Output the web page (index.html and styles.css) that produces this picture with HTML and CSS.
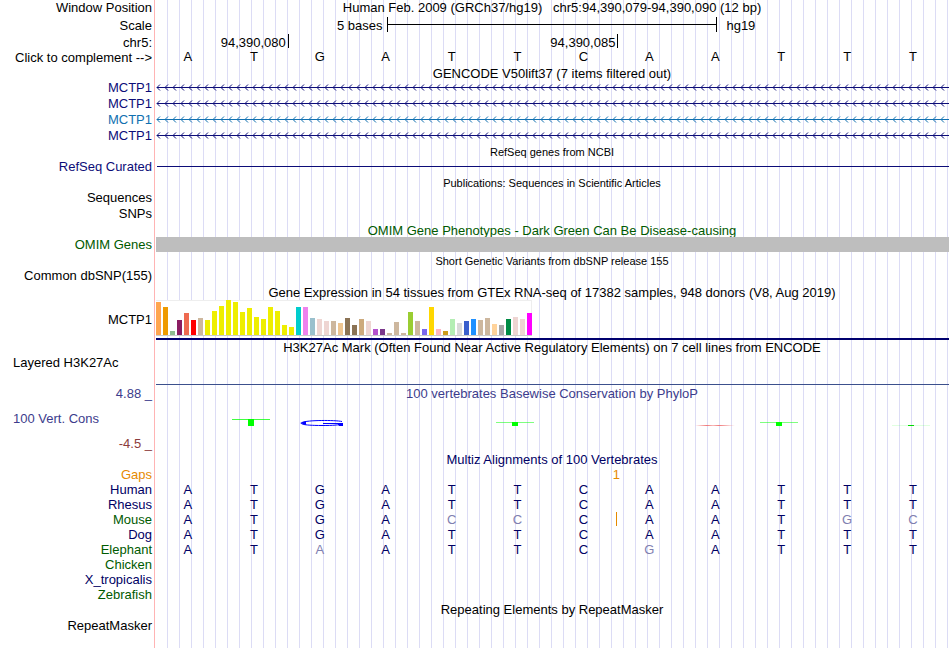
FILE: index.html
```html
<!DOCTYPE html>
<html lang="en">
<head>
  <meta charset="utf-8">
  <title>Human chr5:94,390,079-94,390,090</title>
  <link rel="stylesheet" href="styles.css">
</head>
<body>
  <main class="browser">
    <div class="row ruler">
      <div class="label">Window Position</div>
      <div class="title">Human Feb. 2009 (GRCh37/hg19) &nbsp; chr5:94,390,079-94,390,090 (12 bp)</div>
    </div>
    <div class="row ruler scale-row">
      <div class="label">Scale</div>
      <div class="scale">
        <span class="scale-name">5 bases</span>
        <span class="scale-bar"></span>
        <span class="scale-db">hg19</span>
      </div>
    </div>
    <div class="row coords">
      <div class="label">chr5:</div>
      <div class="bases ticks">
        <span class="tick tick-first">94,390,080</span>
        <span class="tick tick-second">94,390,085</span>
      </div>
    </div>
    <div class="row">
      <button class="label complement" type="button">Click to complement --&gt;</button>
      <div class="bases reference" data-seq="ATGATTCAATTT"></div>
    </div>

    <div class="row gencode-title">
      <div class="title">GENCODE V50lift37 (7 items filtered out)</div>
    </div>
    <div class="row gene navy"><div class="label">MCTP1</div><svg class="intron"></svg></div>
    <div class="row gene navy"><div class="label">MCTP1</div><svg class="intron"></svg></div>
    <div class="row gene blue"><div class="label">MCTP1</div><svg class="intron"></svg></div>
    <div class="row gene navy"><div class="label">MCTP1</div><svg class="intron"></svg></div>

    <div class="row">
      <div class="title small">RefSeq genes from NCBI</div>
    </div>
    <div class="row short navy">
      <div class="label">RefSeq Curated</div>
      <div class="refseq-line"></div>
    </div>

    <div class="row">
      <div class="title small">Publications: Sequences in Scientific Articles</div>
    </div>
    <div class="row"><div class="label">Sequences</div></div>
    <div class="row short"><div class="label">SNPs</div></div>

    <div class="row low green">
      <div class="title">OMIM Gene Phenotypes - Dark Green Can Be Disease-causing</div>
    </div>
    <div class="row short green">
      <div class="label">OMIM Genes</div>
      <div class="omim-bar"></div>
    </div>

    <div class="row">
      <div class="title small">Short Genetic Variants from dbSNP release 155</div>
    </div>
    <div class="row short"><div class="label">Common dbSNP(155)</div></div>

    <div class="row ruler low">
      <div class="title">Gene Expression in 54 tissues from GTEx RNA-seq of 17382 samples, 948 donors (V8, Aug 2019)</div>
    </div>
    <div class="row gtex">
      <div class="label">MCTP1</div>
      <div class="expression"><div class="bars" id="gtex"></div></div>
    </div>

    <div class="row h3k-title">
      <div class="title">H3K27Ac Mark (Often Found Near Active Regulatory Elements) on 7 cell lines from ENCODE</div>
    </div>
    <div class="row h3k">
      <div class="label left">Layered H3K27Ac</div>
      <div class="signal"></div>
    </div>

    <div class="row cons">
      <div class="label">4.88 _</div>
      <div class="title">100 vertebrates Basewise Conservation by PhyloP</div>
    </div>
    <div class="row phylop">
      <div class="phylop-labels">
        <div class="label left cons">100 Vert. Cons</div>
        <div class="label minimum">-4.5 _</div>
      </div>
      <svg class="logo">
        <defs>
          <linearGradient id="fade">
            <stop offset="0" stop-color="#f07878" stop-opacity="0"/>
            <stop offset=".3" stop-color="#f07878"/>
            <stop offset=".45" stop-color="#f07878" stop-opacity=".5"/>
            <stop offset=".6" stop-color="#f07878"/>
            <stop offset="1" stop-color="#f07878" stop-opacity="0"/>
          </linearGradient>
        </defs>
        <g fill="#00ff00">
          <rect x="77" y="17" width="38" height="1" opacity=".75"/>
          <rect x="93" y="17" width="6" height="7"/>
          <rect x="341" y="20" width="38" height="1" opacity=".5"/>
          <rect x="357" y="20" width="6" height="4"/>
          <rect x="605" y="20" width="38" height="1" opacity=".5"/>
          <rect x="621" y="20" width="6" height="4"/>
          <rect x="737" y="23" width="38" height="1" opacity=".12"/>
          <rect x="753" y="23" width="6" height="1" fill="#00dc00"/>
        </g>
        <rect x="540" y="23" width="40" height="1" fill="url(#fade)"/>
        <!-- flattened G -->
        <path d="M187 19.5C180 18 152 18 147 20.5C143 23 158 23.5 167 23.5C178 23.5 184 23 187 22" fill="none" stroke="#0000ff"/>
        <path d="M145 21l6-2v4zM182 21h6v3h-4zM168 21h15v1h-15z" fill="#0000ff"/>
      </svg>
    </div>

    <div class="row short dark">
      <div class="title">Multiz Alignments of 100 Vertebrates</div>
    </div>
    <div class="row short orange">
      <div class="label">Gaps</div>
      <div class="bases"><span class="gap-count">1</span></div>
    </div>
    <div class="row short dark"><div class="label">Human</div><div class="bases" data-seq="ATGATTCAATTT"></div></div>
    <div class="row short dark"><div class="label">Rhesus</div><div class="bases" data-seq="ATGATTCAATTT"></div></div>
    <div class="row short dark"><div class="label green">Mouse</div><div class="bases" data-seq="ATGACCCAATGC" data-gap="6"></div></div>
    <div class="row short dark"><div class="label">Dog</div><div class="bases" data-seq="ATGATTCAATTT"></div></div>
    <div class="row short dark"><div class="label green">Elephant</div><div class="bases" data-seq="ATAATTCGATTT"></div></div>
    <div class="row short green"><div class="label">Chicken</div></div>
    <div class="row short dark"><div class="label">X_tropicalis</div></div>
    <div class="row short green"><div class="label">Zebrafish</div></div>

    <div class="row">
      <div class="title">Repeating Elements by RepeatMasker</div>
    </div>
    <div class="row short"><div class="label">RepeatMasker</div></div>
  </main>

  <script>
    const human = 'ATGATTCAATTT';

    // Bases, with the ones that differ from human dimmed
    document.querySelectorAll('[data-seq]').forEach(row => {
      [...row.dataset.seq].forEach((base, i) => {
        const cell = document.createElement('span');
        cell.textContent = base;
        if (base !== human[i]) cell.classList.add('mismatch');
        if (row.dataset.gap === String(i)) cell.classList.add('gap-after');
        row.appendChild(cell);
      });
    });

    // Introns: a line with a strand arrow every 8 pixels
    function drawIntrons() {
      document.querySelectorAll('.intron').forEach(svg => {
        const width = svg.getBoundingClientRect().width;
        let arrows = '';
        for (let x = 2; x < width - 4; x += 8) {
          arrows += `M${x + 3} 5.5l-3 3 3 3`;
        }
        svg.innerHTML = `<path class="arrows" d="${arrows}"/><rect x="2" y="8" width="${width - 2}" height="1"/>`;
      });
    }
    drawIntrons();
    window.addEventListener('resize', drawIntrons);

    // GTEx tissues: [height, color]
    const tissues = [
      [33, '#ffa54f'], [28, '#ee9a00'], [4, '#8fbc8f'], [15, '#8b1c62'], [22, '#ee6a50'], [15, '#ff0000'],
      [17, '#cdb79e'], [15, '#eeee00'], [24, '#eeee00'], [29, '#eeee00'], [35, '#eeee00'], [33, '#eeee00'],
      [23, '#eeee00'], [27, '#eeee00'], [18, '#eeee00'], [16, '#eeee00'], [28, '#eeee00'], [24, '#eeee00'],
      [10, '#eeee00'], [8, '#eeee00'], [28, '#00cdcd'], [28, '#ee82ee'], [17, '#9ac0cd'], [16, '#eed5d2'],
      [14, '#eed5d2'], [14, '#cdb79e'], [12, '#eec591'], [17, '#8b7355'], [10, '#8b7355'], [16, '#cdaa7d'],
      [14, '#eed5d2'], [6, '#b452cd'], [6, '#7a378b'], [2, '#cdb79e'], [13, '#cdb79e'], [2, '#cdb79e'],
      [23, '#9acd32'], [14, '#cdb79e'], [6, '#7a67ee'], [28, '#ffd700'], [6, '#ffb6c1'], [4, '#cd9b1d'],
      [16, '#b4eeb4'], [12, '#d9d9d9'], [14, '#3a5fcd'], [16, '#1e90ff'], [15, '#cdb79e'], [17, '#cdb79e'],
      [11, '#ffd39b'], [10, '#a6a6a6'], [16, '#008b45'], [18, '#eed5d2'], [16, '#eed5d2'], [22, '#ff00ff']
    ];
    document.getElementById('gtex').innerHTML = tissues
      .map(([height, color]) => `<span class="bar" style="height: ${height}px; background: ${color}"></span>`)
      .join('');
  </script>
</body>
</html>
```
FILE: styles.css
```css
body {
  margin: 0;
  background: white;
  color: black;
  font-family: "Liberation Sans", Arial, sans-serif;
  font-size: 13px;
}
.browser {
  min-height: 100vh;
  box-sizing: border-box;
  padding-right: 1px;
  overflow: hidden;
  background:
    linear-gradient(#ffb4b4, #ffb4b4) 154px 0 / 1px 100% no-repeat,
    repeating-linear-gradient(to right, transparent 0 11px, #dcdcf5 11px 12px) 156px 0 no-repeat;
}
.row {
  display: grid;
  grid-template-columns: 155px minmax(0, 1fr);
  height: 16px;
  line-height: 16px;
  white-space: nowrap;
}
.row.ruler {
  height: 17px;
}
.row.short {
  height: 15px;
  line-height: 15px;
}
.row.gencode-title {
  height: 13px;
}
.row.gene,
.row.coords,
.row.scale-row {
  line-height: 18px;
}
.row.low {
  line-height: 20px;
}
.label {
  padding-right: 3px;
  text-align: right;
}
.label.left {
  padding-left: 13px;
  text-align: left;
}
.title {
  grid-column: 2;
  text-align: center;
}
.small {
  font-size: 11px;
  line-height: 18px;
}
.navy {
  color: #0c0c78;
}
.blue {
  color: #1070b0;
}
.green {
  color: #005a00;
}
.dark {
  color: #000064;
}
.orange {
  color: #e68a00;
}
.cons {
  color: #3c3c8c;
}

/* ruler */
.scale {
  display: grid;
  grid-template-columns: 1fr 41.67% 1fr;
}
.scale-name {
  padding-right: 4px;
  text-align: right;
}
.scale-bar {
  height: 15px;
  border: solid black;
  border-width: 0 1px;
  box-sizing: border-box;
  background: linear-gradient(black, black) 0 7px / 100% 1px no-repeat;
}
.scale-db {
  padding-left: 9px;
}
.bases {
  display: grid;
  grid-template-columns: repeat(12, 1fr);
  padding-right: 3px;
  text-align: center;
}
.tick {
  height: 14px;
  margin-right: -2px;
  padding-right: 2px;
  border-right: 1px solid black;
  text-align: right;
}
.tick-first {
  grid-column: 1 / span 2;
}
.tick-second {
  grid-column: 3 / span 5;
}
.complement {
  padding: 0 3px 0 0;
  border: 0;
  background: none;
  color: inherit;
  font: inherit;
  line-height: 16px;
  cursor: pointer;
}
.reference {
  line-height: 14px;
}
.mismatch {
  color: #8080b0;
}
.gap-after {
  height: 14px;
  box-shadow: 1px 0 #e68a00;
}
.gap-count {
  grid-column: 7 / span 2;
}

/* genes */
.intron {
  width: 100%;
  height: 16px;
  fill: currentColor;
}
.arrows {
  fill: none;
  stroke: currentColor;
}
.refseq-line {
  height: 1px;
  margin: 7px 0 0 2px;
  background: #0c0c78;
}
.omim-bar {
  margin-left: 1px;
  background: #bebebe;
}

/* expression */
.row.gtex {
  height: 38px;
  line-height: 40px;
}
.expression {
  margin-left: 1px;
  border-bottom: 2px solid #00006e;
}
.bars {
  display: flex;
  align-items: flex-end;
  gap: 2px;
  width: max-content;
  height: 35px;
  border-bottom: 1px solid #ccc;
  background: white;
  box-shadow: inset -1px 1px #eee;
}
.bar {
  width: 5px;
}

/* signal tracks */
.row.h3k-title {
  height: 18px;
  line-height: 20px;
}
.row.h3k {
  height: 30px;
  line-height: 14px;
}
.signal {
  height: 28px;
  margin-left: 1px;
  border-bottom: 1px solid #3c508c;
}
.row.phylop {
  height: 50px;
}
.phylop-labels {
  display: flex;
  flex-direction: column;
  justify-content: space-between;
  padding-top: 9px;
}
.minimum {
  color: #8c3c3c;
}
.logo {
  width: 100%;
  height: 50px;
}
```
